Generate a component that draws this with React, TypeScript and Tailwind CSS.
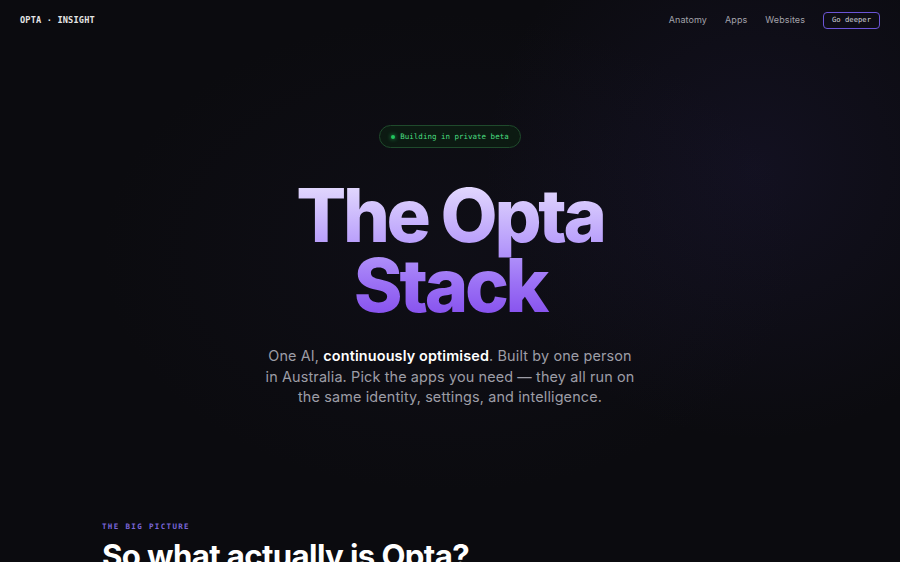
import React from "react";

const mono = { fontFamily: '"DejaVu Sans Mono", "Liberation Mono", monospace' };
const sans = { fontFamily: 'Inter, "Noto Sans", sans-serif' };

export default function App() {
  return (
    <div
      className="w-[900px] h-[562px] overflow-hidden bg-[#0b0b0f] bg-[radial-gradient(circle_at_84%_30%,rgba(70,55,150,0.13),transparent_32%),radial-gradient(ellipse_at_50%_45%,rgba(40,35,70,0.14),transparent_55%)] text-white"
      style={sans}
    >
      <header className="h-[40px] flex items-center justify-between pl-[20px] pr-[20px]">
        <div className="text-[8.6px] font-bold tracking-[0.02em] text-[#e5e5e5]" style={mono}>
          OPTA · INSIGHT
        </div>
        <nav className="flex items-center">
          <a className="text-[9px] tracking-[0.01em] text-[#a3a3ab] mr-[18px]">Anatomy</a>
          <a className="text-[9px] tracking-[0.01em] text-[#a3a3ab] mr-[18px]">Apps</a>
          <a className="text-[9px] tracking-[0.01em] text-[#a3a3ab] mr-[18px]">Websites</a>
          <button
            className="h-[17px] px-[8px] rounded-[4px] border border-[#6b55d6] text-[7.2px] text-[#d4d4dc] flex items-center"
            style={mono}
          >
            Go deeper
          </button>
        </nav>
      </header>

      <section className="flex flex-col items-center pt-[85px]">
        <div
          className="h-[23px] px-[11px] rounded-full border border-[#1f4a2c] bg-[#0c1a12] flex items-center gap-[5px]"
          style={mono}
        >
          <span className="w-[4px] h-[4px] rounded-full bg-[#22c55e] shadow-[0_0_4px_#22c55e]" />
          <span className="text-[7.5px] text-[#4ade80]">Building in private beta</span>
        </div>

        <h1
          className="mt-[32px] text-center text-[74px] leading-[70px] font-extrabold tracking-[-0.045em] bg-[linear-gradient(180deg,#e6defe_0%,#b79cfb_45%,#9c72f5_70%,#8047ec_100%)] bg-clip-text text-transparent pb-[6px]"
        >
          The Opta
          <br />
          Stack
        </h1>

        <p className="mt-[20px] w-[372px] text-center text-[14.4px] leading-[20.5px] tracking-[0.01em] text-[#9d9da6]">
          One AI, <b className="font-semibold text-white">continuously optimised</b>. Built by one person in Australia. Pick the apps you need — they all run on the same identity, settings, and intelligence.
        </p>
      </section>

      <section className="pl-[102px] pt-[114px]">
        <div className="text-[7.5px] leading-[10px] font-bold tracking-[0.18em] text-[#7a66d9]" style={mono}>
          THE BIG PICTURE
        </div>
        <h2 className="mt-[6px] text-[31.2px] leading-[36px] font-bold tracking-[-0.02em] text-white whitespace-nowrap">
          So what actually is Opta?
        </h2>
      </section>
    </div>
  );
}
